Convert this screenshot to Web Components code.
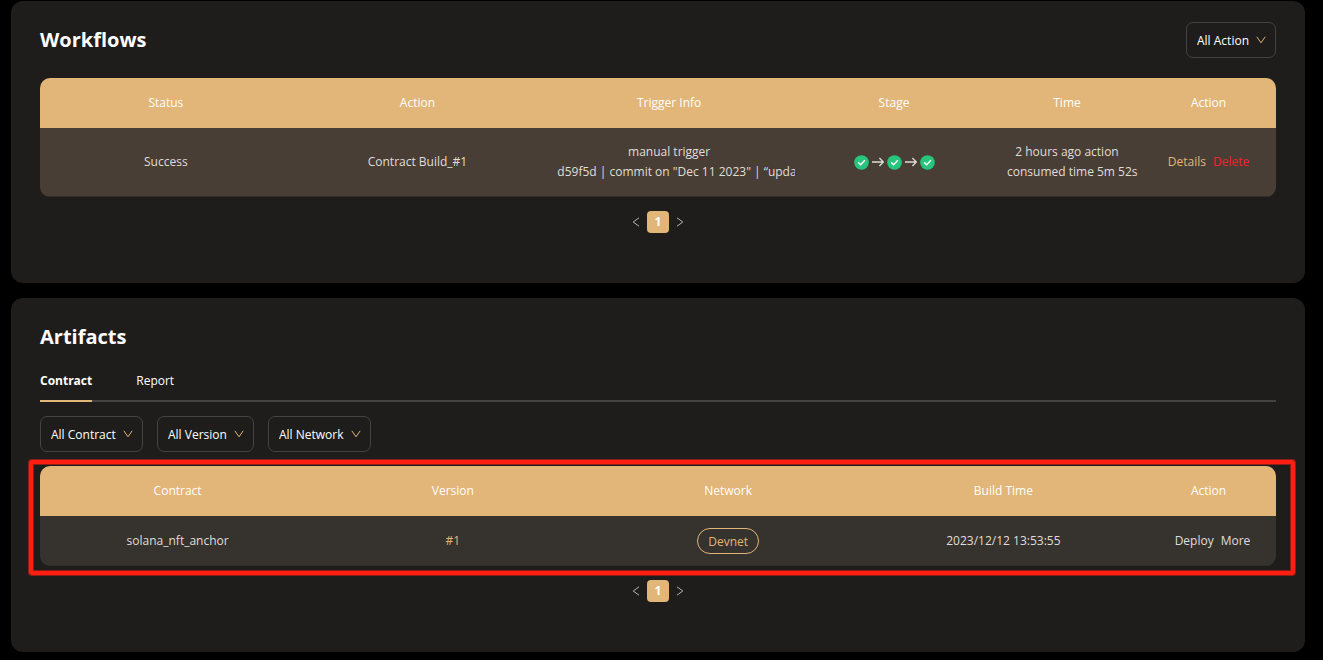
<!DOCTYPE html>
<html lang="en">
<head>
<meta charset="utf-8">
<title>Workflows</title>
<style>
  body {
    margin: 0;
    background: #000;
    color: #fff;
    font: 12px/20px "Open Sans", "Noto Sans", sans-serif;
  }
</style>
</head>
<body>
<project-page></project-page>

<script>
const tableStyles = `
  :host { display: block; }
  table {
    width: 100%;
    table-layout: fixed;
    border-collapse: separate;
    border-spacing: 0;
    border-radius: 10px;
    overflow: hidden;
    text-align: center;
  }
  th {
    height: 50px;
    padding: 0;
    background: #e2b578;
    color: #fff;
    font-weight: 400;
  }
  td {
    box-sizing: border-box;
    padding: 0 14px;
    background: var(--row-color, #36322d);
    border-bottom: 1px solid #302e2c;
    color: #e0ddd8;
    overflow: hidden;
    white-space: nowrap;
  }
  .links { display: flex; justify-content: center; gap: 7px; }
  a { color: inherit; text-decoration: none; }
  .gold { color: #e2b578; }
`;

function define(name, html) {
  const template = document.createElement('template');
  template.innerHTML = html;
  customElements.define(name, class extends HTMLElement {
    constructor() {
      super();
      this.attachShadow({ mode: 'open' }).append(template.content.cloneNode(true));
    }
  });
}

customElements.define('filter-select', class extends HTMLElement {
  connectedCallback() {
    const root = this.attachShadow({ mode: 'open' });
    root.innerHTML = `
      <style>
        :host { display: block; position: relative; }
        select {
          appearance: none;
          box-sizing: border-box;
          display: block;
          height: 36px;
          padding: 2px 26px 0 10px;
          border: 1px solid #434343;
          border-radius: 7px;
          background: transparent;
          color: #fff;
          font: inherit;
        }
        svg {
          position: absolute;
          right: 10px;
          top: 13px;
          width: 10px;
          height: 10px;
          pointer-events: none;
        }
      </style>
      <select><option></option></select>
      <svg viewBox="0 0 10 10" fill="none" stroke="#e2b578"><path d="M.8 1.8 5 7.8 9.2 1.8"/></svg>`;
    const label = this.getAttribute('label');
    root.querySelector('option').textContent = label;
    root.querySelector('select').setAttribute('aria-label', label);
  }
});

define('card-panel', `
  <style>
    :host {
      display: block;
      box-sizing: border-box;
      padding: 21px 29px 50px;
      border-radius: 12px;
      background: #1e1d1b;
    }
    header {
      display: flex;
      justify-content: space-between;
      align-items: center;
      min-height: 36px;
    }
  </style>
  <header><slot name="title"></slot><slot name="tools"></slot></header>
  <slot></slot>`);

define('page-nav', `
  <style>
    :host { display: block; }
    nav { display: flex; justify-content: center; }
    button {
      display: grid;
      place-items: center;
      width: 22px;
      height: 22px;
      padding: 0;
      border: 0;
      border-radius: 4px;
      background: none;
      color: #b4b3b2;
      font: inherit;
    }
    .current { background: #e2b578; color: #fff; font-weight: 700; }
    svg { width: 8px; height: 10px; }
  </style>
  <nav aria-label="Pagination">
    <button aria-label="Previous page"><svg viewBox="0 0 8 10" fill="none" stroke="currentColor"><path d="M7 .8 1.2 5 7 9.2"/></svg></button>
    <button class="current" aria-current="page">1</button>
    <button aria-label="Next page"><svg viewBox="0 0 8 10" fill="none" stroke="currentColor"><path d="M1 .8 6.8 5 1 9.2"/></svg></button>
  </nav>`);

const check = `<svg class="check" viewBox="0 0 15 15"><circle cx="7.5" cy="7.5" r="7.3" fill="#28c57c"/><path d="M4.2 7.4 6.6 9.8 10.9 5.3" fill="none" stroke="#fff" stroke-width="1.5"/></svg>`;
const arrow = `<svg class="arrow" viewBox="0 0 12 10"><path d="M0 5H11.2M7.4 1 11.4 5 7.4 9" fill="none" stroke="#e0ddd8" stroke-width="1.3"/></svg>`;
define('stage-flow', `
  <style>
    :host { display: flex; justify-content: center; align-items: center; gap: 3px; }
    .check { width: 15px; height: 15px; }
    .arrow { width: 12px; height: 10px; }
  </style>
  ${check}${arrow}${check}${arrow}${check}`);

define('workflow-table', `
  <style>
    ${tableStyles}
    td { height: 69px; --row-color: #483e35; }
    .stage { width: 198px; }
    .time { width: 148px; }
    .action { width: 135px; }
    .danger { color: #f5222d; }
  </style>
  <table>
    <thead><tr>
      <th>Status</th><th>Action</th><th>Trigger Info</th>
      <th class="stage">Stage</th><th class="time">Time</th><th class="action">Action</th>
    </tr></thead>
    <tbody><tr>
      <td>Success</td>
      <td>Contract Build_#1</td>
      <td>manual trigger<br>d59f5d | commit on "Dec 11 2023" | “update”</td>
      <td><stage-flow></stage-flow></td>
      <td>2 hours ago action<br>consumed time 5m 52s</td>
      <td><div class="links"><a class="gold" href="#details">Details</a><a class="danger" href="#delete">Delete</a></div></td>
    </tr></tbody>
  </table>`);

define('artifact-table', `
  <style>
    ${tableStyles}
    td { height: 50px; }
    .action { width: 135px; }
    .links { padding-left: 8px; }
    .tag {
      display: inline-block;
      padding: 3px 10px 1px;
      border: 1px solid #e2b578;
      border-radius: 13px;
      vertical-align: middle;
    }
  </style>
  <table>
    <thead><tr>
      <th>Contract</th><th>Version</th><th>Network</th><th>Build Time</th><th class="action">Action</th>
    </tr></thead>
    <tbody><tr>
      <td>solana_nft_anchor</td>
      <td><a class="gold" href="#1">#1</a></td>
      <td><span class="tag gold">Devnet</span></td>
      <td>2023/12/12 13:53:55</td>
      <td><div class="links"><a href="#deploy">Deploy</a><a href="#more">More</a></div></td>
    </tr></tbody>
  </table>`);

define('tab-bar', `
  <style>
    :host { display: block; }
    div { display: flex; gap: 44px; box-shadow: inset 0 -2px #434343; }
    button {
      height: 42px;
      padding: 0;
      border: 0;
      background: none;
      color: #fff;
      font: inherit;
    }
    [aria-selected="true"] { font-weight: 700; box-shadow: inset 0 -2px #e2b578; }
  </style>
  <div role="tablist">
    <button role="tab" aria-selected="true">Contract</button>
    <button role="tab" aria-selected="false">Report</button>
  </div>`);

define('marked-area', `
  <style>
    :host { display: block; position: relative; }
    .frame {
      position: absolute;
      inset: -6px -19px -9px -11px;
      border: 4px solid #ff1e12;
      border-radius: 3px;
      box-shadow: 0 0 0 1px #8e1d17, inset 0 0 0 1px #8e1d17;
      pointer-events: none;
    }
  </style>
  <slot></slot><div class="frame"></div>`);

define('project-page', `
  <style>
    :host {
      display: flex;
      flex-direction: column;
      gap: 15px;
      padding: 1px 18px 8px 11px;
    }
    h2 { margin: 0; font-size: 20px; line-height: 36px; font-weight: 700; }
    workflow-table { margin: 20px 0 14px; }
    tab-bar { margin-top: 5px; }
    .filters { display: flex; flex-wrap: wrap; gap: 14px; margin: 14px 0; }
    marked-area { margin-bottom: 14px; }
  </style>
  <card-panel>
    <h2 slot="title">Workflows</h2>
    <filter-select slot="tools" label="All Action"></filter-select>
    <workflow-table></workflow-table>
    <page-nav></page-nav>
  </card-panel>
  <card-panel>
    <h2 slot="title">Artifacts</h2>
    <tab-bar></tab-bar>
    <div class="filters">
      <filter-select label="All Contract"></filter-select>
      <filter-select label="All Version"></filter-select>
      <filter-select label="All Network"></filter-select>
    </div>
    <marked-area><artifact-table></artifact-table></marked-area>
    <page-nav></page-nav>
  </card-panel>`);
</script>
</body>
</html>
